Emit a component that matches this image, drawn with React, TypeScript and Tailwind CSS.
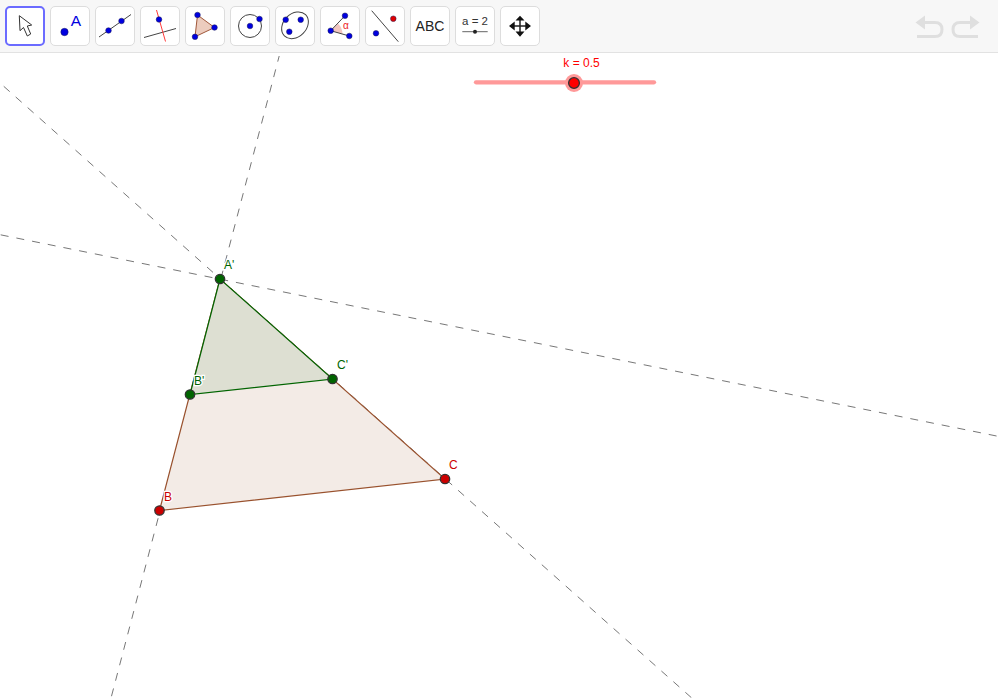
import type { ReactNode } from 'react';

const BLUE = '#0000e0';

function Dot({ x, y, r = 2.8, fill = BLUE }: { x: number; y: number; r?: number; fill?: string }) {
  return <circle cx={x} cy={y} r={r} fill={fill} stroke="#1a1a55" strokeWidth={0.5} />;
}

function ToolButton({ x, selected, children }: { x: number; selected?: boolean; children: ReactNode }) {
  return (
    <button
      className={
        selected
          ? 'w-10 h-10 shrink-0 rounded-[5px] border-2 border-[#6b6bff] bg-white'
          : 'w-10 h-10 shrink-0 rounded-[5px] border border-[#dddddd] bg-white'
      }
    >
      <svg viewBox={`${x} 6 40 40`} className={selected ? 'block w-10 h-10 -m-[2px]' : 'block w-10 h-10 -m-px'}>
        {children}
      </svg>
    </button>
  );
}

function CanvasPoint({ x, y, label, lx, ly, color, fill }: { x: number; y: number; label: string; lx: number; ly: number; color: string; fill: string }) {
  return (
    <g>
      <circle cx={x} cy={y} r={4.7} fill={fill} stroke="#333333" strokeWidth={1.3} />
      <text x={lx} y={ly} fontSize={12} fill={color} stroke="white" strokeWidth={2.5} paintOrder="stroke">
        {label}
      </text>
    </g>
  );
}

export default function App() {
  return (
    <div className="w-[998px] h-[698px] flex flex-col bg-white overflow-hidden font-['Liberation_Sans',sans-serif]">
      <div className="h-[53px] shrink-0 flex items-start gap-[5px] pl-[5px] pr-[17px] pt-[6px] bg-[#f7f7f7] border-b border-[#e2e2e2]">
        <ToolButton x={5} selected>
          <path d="M19.3 15.7 L20 30.7 L23.5 27.5 L27.3 36 L30.7 34 L27.3 26 L31.7 25 Z" fill="white" stroke="#333333" strokeWidth={1} />
        </ToolButton>
        <ToolButton x={50}>
          <Dot x={64.5} y={32} r={3.7} />
          <text x={76} y={25.5} fontSize={15.5} textAnchor="middle" fill={BLUE}>A</text>
        </ToolButton>
        <ToolButton x={95}>
          <line x1={99} y1={37} x2={131} y2={14.5} stroke="#444444" strokeWidth={1} />
          <Dot x={108.5} y={30.5} />
          <Dot x={121.5} y={21} />
        </ToolButton>
        <ToolButton x={140}>
          <line x1={144} y1={37.5} x2={176} y2={28.5} stroke="#444444" strokeWidth={1} />
          <line x1={156.5} y1={10} x2={165.5} y2={41.5} stroke="#ff3b3b" strokeWidth={1} />
          <Dot x={159} y={19.5} />
        </ToolButton>
        <ToolButton x={185}>
          <polygon points="197.5,15 214.5,27.5 195,36.8" fill="#ecccbe" stroke="#a0573a" strokeWidth={1} />
          <Dot x={197.5} y={15} />
          <Dot x={214.5} y={27.5} />
          <Dot x={195} y={36.8} />
        </ToolButton>
        <ToolButton x={230}>
          <circle cx={250} cy={26} r={11.5} fill="none" stroke="#444444" strokeWidth={1} />
          <Dot x={250} y={26} />
          <Dot x={259.5} y={19} />
        </ToolButton>
        <ToolButton x={275}>
          <ellipse cx={295} cy={25.3} rx={15} ry={11.5} transform="rotate(-45 295 25.3)" fill="none" stroke="#444444" strokeWidth={1} />
          <Dot x={285.7} y={19.7} />
          <Dot x={300.7} y={19.7} />
          <Dot x={289.3} y={31.7} />
        </ToolButton>
        <ToolButton x={320}>
          <path d="M330.7 30.7 L338 23.5 Q342.5 28 342.5 34 Z" fill="#f2c6c0" stroke="none" />
          <line x1={330.7} y1={30.7} x2={345} y2={15.7} stroke="#444444" strokeWidth={1} />
          <line x1={330.7} y1={30.7} x2={349.3} y2={36} stroke="#444444" strokeWidth={1} />
          <Dot x={330.7} y={30.7} />
          <Dot x={345} y={15.7} />
          <Dot x={349.3} y={36} />
          <text x={346} y={29} fontSize={10} textAnchor="middle" fill="#ee2222">α</text>
        </ToolButton>
        <ToolButton x={365}>
          <line x1={371.7} y1={10.7} x2={398.3} y2={41.7} stroke="#444444" strokeWidth={1} />
          <Dot x={393.3} y={18.7} fill="#e00000" />
          <Dot x={376} y={33.3} />
        </ToolButton>
        <ToolButton x={410}>
          <text x={430} y={31} fontSize={14} textAnchor="middle" fill="#222222">ABC</text>
        </ToolButton>
        <ToolButton x={455}>
          <text x={475} y={25} fontSize={11.5} textAnchor="middle" fill="#333333">a = 2</text>
          <line x1={462.3} y1={31.7} x2={487.7} y2={31.7} stroke="#666666" strokeWidth={1} />
          <circle cx={475} cy={31.7} r={2} fill="#222222" />
        </ToolButton>
        <ToolButton x={500}>
          <path d="M520 18 V34 M512 26 H528" stroke="#222222" strokeWidth={1.5} fill="none" />
          <path d="M520 15.7 L524.5 20.5 H515.5 Z M520 36.7 L524.5 31.5 H515.5 Z M509 26 L514.7 21.5 V30.5 Z M531 26 L525.3 21.5 V30.5 Z" fill="#111111" />
        </ToolButton>
        <div className="ml-auto h-10 flex items-center gap-[7px]">
          <svg viewBox="914 12 30 27" className="w-[30px] h-[27px]">
            <path d="M915.5 21.5 L925 14.5 V28.5 Z" fill="#dfdfdf" />
            <path d="M924 21.5 H935 Q942 21.5 942 28.5 Q942 35.5 935 35.5 H917" fill="none" stroke="#dfdfdf" strokeWidth={3} />
          </svg>
          <svg viewBox="951 12 30 27" className="w-[30px] h-[27px]">
            <path d="M979.5 21.5 L970 14.5 V28.5 Z" fill="#dfdfdf" />
            <path d="M971 21.5 H960 Q953 21.5 953 28.5 Q953 35.5 960 35.5 H978" fill="none" stroke="#dfdfdf" strokeWidth={3} />
          </svg>
        </div>
      </div>

      <svg viewBox="0 53 998 645" className="w-[998px] h-[645px] block">
        <g stroke="#777777" strokeWidth={1} strokeDasharray="8 8" fill="none">
          <line x1={279.2} y1={56} x2={110.5} y2={700} strokeDashoffset={2.2} />
          <line x1={0} y1={83} x2={694} y2={700} strokeDashoffset={11} />
          <line x1={0} y1={234.7} x2={1000} y2={436.7} strokeDashoffset={15.3} />
        </g>
        <polygon points="220,279 159.5,510.5 445,479" fill="#f3ebe6" stroke="#99512d" strokeWidth={1.2} />
        <polygon points="220,279 190,394.5 332.5,379" fill="#dddfd2" stroke="#006400" strokeWidth={1.2} />

        <line x1={476} y1={82.3} x2={654} y2={82.3} stroke="#ff9999" strokeWidth={4.3} strokeLinecap="round" />
        <circle cx={574} cy={83} r={9} fill="#ff9999" />
        <circle cx={574} cy={83} r={5.4} fill="#ff0000" stroke="#333333" strokeWidth={1.3} />
        <text x={581.5} y={67} fontSize={12} textAnchor="middle" fill="#ff0000">k = 0.5</text>

        <CanvasPoint x={220} y={279} label="A'" lx={224} ly={269} color="#006400" fill="#006400" />
        <CanvasPoint x={190} y={394.5} label="B'" lx={194} ly={385} color="#006400" fill="#006400" />
        <CanvasPoint x={332.5} y={379} label="C'" lx={337} ly={369} color="#006400" fill="#006400" />
        <CanvasPoint x={159.5} y={510.5} label="B" lx={164} ly={501} color="#cc0000" fill="#cc0000" />
        <CanvasPoint x={445} y={479} label="C" lx={449} ly={469} color="#cc0000" fill="#cc0000" />
      </svg>
    </div>
  );
}
